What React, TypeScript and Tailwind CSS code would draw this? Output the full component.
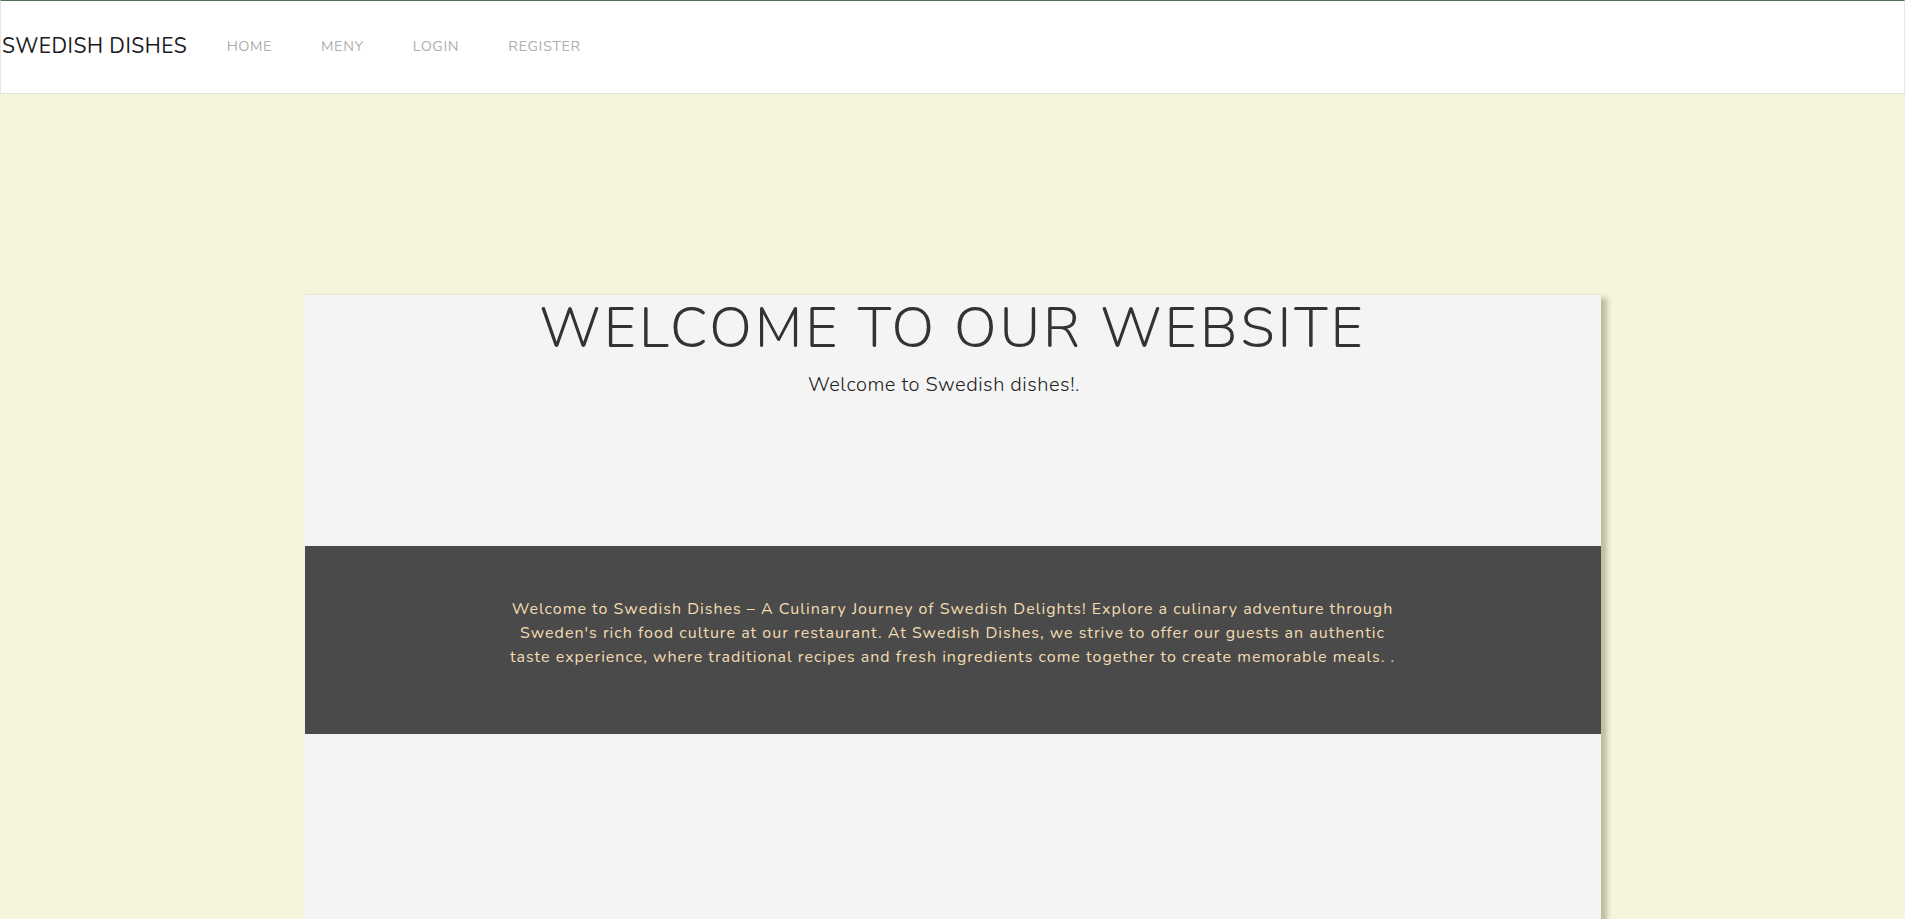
import React from 'react';

const font = { fontFamily: '"Nunito", "Lato", "Open Sans", sans-serif' };

export default function App() {
  return (
    <div className="min-h-screen w-full bg-[#f5f4dc] overflow-hidden" style={font}>
      <nav className="h-[94px] bg-white border-t border-t-[#56705a] border-b border-b-[#e2e2dc] border-x border-x-[#e6e6e6] flex items-center">
        <a className="pl-[1px] text-[21px] tracking-[0.5px] text-[#1c1a22] mr-[15px]">SWEDISH DISHES</a>
        <ul className="flex items-center">
          <li className="px-[24.5px] text-[14.5px] tracking-[0.6px] text-[#aeaeae]">HOME</li>
          <li className="px-[24.5px] text-[14.5px] tracking-[0.6px] text-[#aeaeae]">MENY</li>
          <li className="px-[24.5px] text-[14.5px] tracking-[0.6px] text-[#aeaeae]">LOGIN</li>
          <li className="px-[24.5px] text-[14.5px] tracking-[0.6px] text-[#aeaeae]">REGISTER</li>
        </ul>
      </nav>

      <div className="pt-[200px]">
        <div className="mx-auto w-[1296px] min-h-[700px] bg-[#f4f4f4] border-t border-t-[#e4e4dc] shadow-[6px_4px_5px_rgba(90,90,60,0.35)]">
          <div className="text-center h-[251px]">
            <h1 className="text-[56px] font-light leading-[1.2] tracking-[3px] text-[#333]">WELCOME TO OUR WEBSITE</h1>
            <p className="mt-[8px] pr-[17px] text-[20px] font-light tracking-[0.5px] text-[#222]">Welcome to Swedish dishes!.</p>
          </div>

          <div className="bg-[#4a4a4a] h-[188px] pt-[51px] text-center">
            <p className="text-[16px] leading-[24px] tracking-[1px] text-[#f3dcb1]">
              Welcome to Swedish Dishes – A Culinary Journey of Swedish Delights! Explore a culinary adventure through
              <br />
              Sweden's rich food culture at our restaurant. At Swedish Dishes, we strive to offer our guests an authentic
              <br />
              taste experience, where traditional recipes and fresh ingredients come together to create memorable meals. .
            </p>
          </div>
        </div>
      </div>
    </div>
  );
}
